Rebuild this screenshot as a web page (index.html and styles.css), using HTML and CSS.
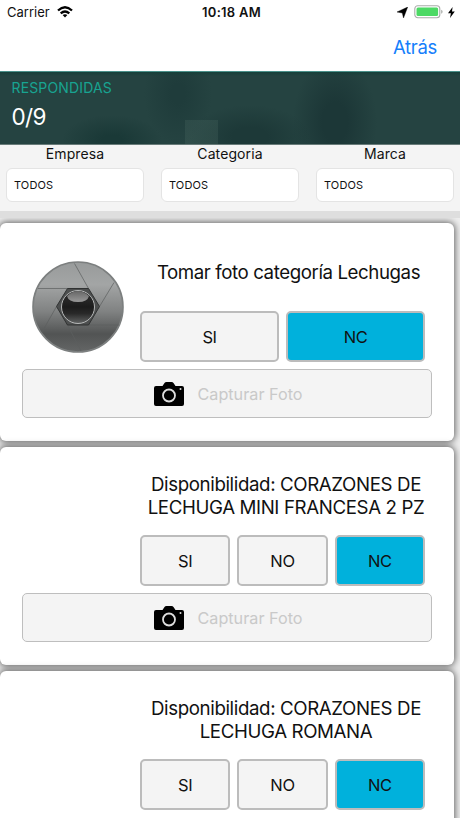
FILE: index.html
```html
<!DOCTYPE html>
<html lang="es">

<head>
    <meta charset="UTF-8">
    <meta name="viewport" content="width=device-width, initial-scale=1.0">
    <title>Respondidas</title>
    <link rel="stylesheet" href="styles.css">
</head>

<body>
    <!-- simbolo de la camara, se usa en cada tarjeta -->
    <svg class="defs" width="0" height="0">
        <symbol id="camera" viewBox="0 0 30 24">
            <path d="M2 4h6.500l2-3q.6-1 2-1h5q1.400 0 2 1l2 3H28q2 0 2 2v16q0 2-2 2H2q-2 0-2-2V6q0-2 2-2z" fill="#000" />
            <circle cx="15" cy="13.500" r="6" fill="none" stroke="#ddd" stroke-width="1.800" />
            <circle cx="26.500" cy="7" r="1" fill="#ddd" />
        </symbol>
    </svg>

    <div class="status">
        <div class="status-left">
            <span>Carrier</span>
            <svg width="16" height="12" viewBox="0 0 16 12" fill="none" stroke="#000" stroke-width="2.300">
                <path d="M1 4.500Q8-1.900 15 4.500" />
                <path d="M3.700 7.400Q8 3.600 12.300 7.400" />
                <path d="M5.600 9.100Q8 7.200 10.400 9.100L8 11.600z" fill="#000" stroke="none" />
            </svg>
        </div>
        <div class="status-time">10:18 AM</div>
        <div class="status-right">
            <svg width="11" height="11" viewBox="0 0 11 11">
                <path d="M10.700 0L6.500 11 5.300 6 0 5z" stroke="#000" stroke-width=".4" />
            </svg>
            <svg class="battery" width="29" height="14" viewBox="0 0 29 14">
                <rect x=".8" y=".8" width="25" height="12" rx="3" fill="#fff" stroke="#a9aca9" stroke-width="1.100" />
                <rect x="2.500" y="2.500" width="21.600" height="8.600" rx="1.500" fill="#4cd964" />
                <path d="M27.200 4.800q1.400.5 1.400 2t-1.400 2z" fill="#a9aca9" />
            </svg>
            <svg width="7" height="11" viewBox="0 0 7 11">
                <path d="M4.600 0L0 6.200h2.900L2 11l4.800-6.400H4z" />
            </svg>
        </div>
    </div>

    <div class="nav"><a class="back">Atrás</a></div>

    <div class="banner">
        <div class="banner-label">RESPONDIDAS</div>
        <div class="banner-count">0/9</div>
    </div>

    <div class="filters">
        <div class="filter">
            <div class="filter-name">Empresa</div>
            <div class="filter-box">TODOS</div>
        </div>
        <div class="filter">
            <div class="filter-name">Categoria</div>
            <div class="filter-box">TODOS</div>
        </div>
        <div class="filter">
            <div class="filter-name">Marca</div>
            <div class="filter-box">TODOS</div>
        </div>
    </div>

    <div class="list">
        <div class="card">
            <div class="question">
                <div class="thumb">
                    <svg width="92" height="92" viewBox="0 0 92 92">
                        <defs>
                            <linearGradient id="disc" x1="0" y1="0" x2="0" y2="1">
                                <stop offset="0" stop-color="#989b9b" />
                                <stop offset=".25" stop-color="#a3a5a5" />
                                <stop offset=".55" stop-color="#808282" />
                                <stop offset=".8" stop-color="#525454" />
                                <stop offset="1" stop-color="#646666" />
                            </linearGradient>
                            <linearGradient id="lens" x1="0" y1="0" x2="0" y2="1">
                                <stop offset="0" stop-color="#333" />
                                <stop offset=".5" stop-color="#1c1c1c" />
                                <stop offset=".7" stop-color="#292929" />
                                <stop offset="1" stop-color="#626464" />
                            </linearGradient>
                            <linearGradient id="shine" x1="0" y1="0" x2="0" y2="1">
                                <stop offset="0" stop-color="#666" />
                                <stop offset="1" stop-color="#999" />
                            </linearGradient>
                        </defs>
                        <circle cx="46" cy="46" r="45" fill="url(#disc)" stroke="#7c7f7f" stroke-width="1.600" />
                        <path d="M35.500 27.500H6M56.500 27.500L42.500 2.500M67.500 45.500L82 21.500M56.500 64H87M35.500 64L49 90M24.500 45.500L10 71" fill="none" stroke="#5c5e5e" stroke-width=".7" />
                        <path d="M35.500 27.500h21l11 18-11 18.500h-21l-11-18.500z" fill="#4d4f4f" stroke="#303232" />
                        <circle cx="46" cy="46" r="16.500" fill="url(#lens)" stroke="#b4b6b6" stroke-width="1" />
                        <path d="M35 35Q46 25 57 35Q55.500 41 46 41T35 35z" fill="url(#shine)" />
                    </svg>
                </div>
                <div class="answer">
                    <div class="title title-short">Tomar foto categoría Lechugas</div>
                    <div class="options">
                        <div class="option">SI</div>
                        <div class="option selected">NC</div>
                    </div>
                </div>
            </div>
            <div class="photo">
                <svg width="30" height="24"><use href="#camera" /></svg>
                <span>Capturar Foto</span>
            </div>
        </div>

        <div class="card">
            <div class="question">
                <div class="thumb"></div>
                <div class="answer">
                    <div class="title">Disponibilidad: CORAZONES DE<br>LECHUGA MINI FRANCESA 2 PZ</div>
                    <div class="options">
                        <div class="option">SI</div>
                        <div class="option">NO</div>
                        <div class="option selected">NC</div>
                    </div>
                </div>
            </div>
            <div class="photo">
                <svg width="30" height="24"><use href="#camera" /></svg>
                <span>Capturar Foto</span>
            </div>
        </div>

        <div class="card">
            <div class="question">
                <div class="thumb"></div>
                <div class="answer">
                    <div class="title">Disponibilidad: CORAZONES DE<br>LECHUGA ROMANA</div>
                    <div class="options">
                        <div class="option">SI</div>
                        <div class="option">NO</div>
                        <div class="option selected">NC</div>
                    </div>
                </div>
            </div>
        </div>
    </div>
</body>

</html>
```
FILE: styles.css
```css
* {
    margin: 0;
    padding: 0;
    box-sizing: border-box;
}

body {
    height: 818px;
    overflow: hidden;
    display: flex;
    flex-direction: column;
    background: #fff;
    color: #111;
    font-family: Inter, "Liberation Sans", sans-serif;
}

.defs {
    position: absolute;
}

.status,
.nav,
.banner,
.filters {
    flex: none;
}

/* barra de estado */
.status {
    height: 24px;
    padding: 0 5px 0 7px;
    display: grid;
    grid-template-columns: 1fr auto 1fr;
    align-items: center;
    font-size: 13px;
}

.status-left {
    display: flex;
    align-items: center;
    gap: 7px;
}

.status-time {
    padding-left: 1px;
    font-weight: 600;
    letter-spacing: 0.25px;
}

.status-right {
    display: flex;
    align-items: center;
    justify-content: flex-end;
    gap: 6px;
}

.battery {
    margin-right: -1px;
}

.nav {
    height: 47px;
    padding: 0 23px 1px 0;
    display: flex;
    align-items: center;
    justify-content: flex-end;
}

.back {
    color: #147efb;
    font-size: 18.500px;
    letter-spacing: -0.3px;
}

/* cabecera con el contador */
.banner {
    height: 74px;
    padding: 7px 11.500px;
    border-top: 1px solid #4b918b;
    border-bottom: 1px solid #687b79;
    background:
        linear-gradient(rgba(19, 64, 57, 0.8), transparent 4px),
        linear-gradient(rgba(75, 105, 98, 0.28), rgba(75, 105, 98, 0.28)) 185px 48px / 33px 26px no-repeat,
        radial-gradient(60px 32px at 250px 65px, #1d3938 30%, transparent),
        radial-gradient(42px 65px at 335px 50px, #1c3737 30%, transparent),
        radial-gradient(34px 50px at 178px 22px, #1f3c3b 20%, transparent),
        radial-gradient(50px 25px at 112px 68px, #1a3937 20%, transparent),
        #254341;
}

.banner-label {
    color: #18a491;
    font-size: 14px;
    line-height: 17px;
    letter-spacing: 0.15px;
}

.banner-count {
    margin-top: 7px;
    color: #fff;
    font-size: 22.500px;
    line-height: 27px;
    letter-spacing: -0.6px;
}

.filters {
    height: 66px;
    padding: 0 6px;
    display: grid;
    grid-template-columns: repeat(3, 1fr);
    gap: 17px;
    background: #f4f4f4;
}

.filter-name {
    height: 23px;
    line-height: 17px;
    text-align: center;
    font-size: 14px;
    letter-spacing: 0.1px;
}

.filter-box {
    height: 34px;
    padding-left: 7px;
    border: 1px solid #e4e4e4;
    border-radius: 6px;
    background: #fff;
    font-size: 11px;
    line-height: 33px;
    letter-spacing: 0.1px;
}

/* lista de preguntas */
.list {
    flex: 1;
    min-height: 0;
    padding: 5px 6px 0 0;
    border-top: 7px solid #dedede;
    background: #eee;
    overflow: hidden;
}

.card {
    height: 217.500px;
    margin-bottom: 6.500px;
    padding: 0 22px;
    border-radius: 6px;
    background: #fff;
    box-shadow: 0 0 7px 1px rgba(0, 0, 0, 0.6);
}

.question {
    height: 146px;
    display: flex;
}

.thumb {
    width: 118px;
    padding: 38px 0 0 10px;
}

.answer {
    width: 292px;
}

.title {
    height: 88px;
    padding-top: 11px;
    display: flex;
    align-items: center;
    justify-content: center;
    text-align: center;
    white-space: nowrap;
    color: #111;
    font-size: 18.700px;
    line-height: 22.500px;
    letter-spacing: -0.38px;
}

.title-short {
    padding: 13px 0 0 5px;
    letter-spacing: -0.42px;
}

.options {
    padding-right: 7px;
    display: flex;
    gap: 7px;
}

.option {
    flex: 1;
    height: 51px;
    border: 2px solid #bcbcbc;
    border-radius: 5px;
    background: #f4f4f4;
    text-align: center;
    font-size: 16.500px;
    line-height: 48px;
    letter-spacing: -0.4px;
}

.option.selected {
    background: #00b1dc;
}

.photo {
    height: 49px;
    padding-left: 2px;
    display: flex;
    align-items: center;
    justify-content: center;
    gap: 14px;
    border: 1px solid #bebebe;
    border-radius: 5px;
    background: #f4f4f4;
    color: #c9c9c9;
    font-size: 16.200px;
}
```
